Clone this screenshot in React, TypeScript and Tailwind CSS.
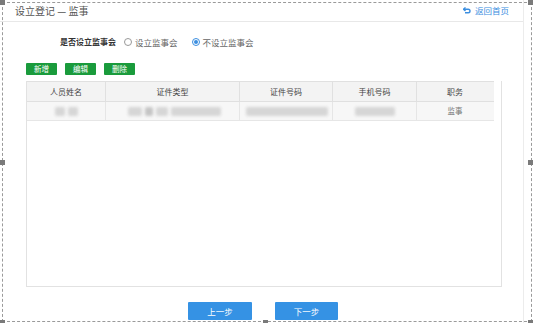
import React from "react";

const font = { fontFamily: '"Noto Sans CJK SC", "Noto Sans", sans-serif' };

function Handle({ className }: { className: string }) {
  return <div className={`absolute w-[5px] h-[5px] bg-[#7a7a7a] ${className}`} />;
}

function Blob({ w, dark = false }: { w: number; dark?: boolean }) {
  return (
    <div
      className={`h-[9px] rounded-[2px] blur-[1.5px] ${dark ? "bg-[#c4c4c4]" : "bg-[#d6d6d6]"}`}
      style={{ width: w }}
    />
  );
}

export default function App() {
  const cols = [
    { label: "人员姓名", w: "w-[79px]" },
    { label: "证件类型", w: "w-[134px]" },
    { label: "证件号码", w: "w-[93px]" },
    { label: "手机号码", w: "w-[84px]" },
    { label: "职务", w: "w-[76px]" },
  ];
  return (
    <div className="relative w-[533px] h-[323px] bg-white overflow-hidden text-[#444]" style={font}>
      {/* panel */}
      <div className="flex flex-col w-[524px] h-[323px] border-r border-[#ececec]">
        <div className="flex items-center justify-between h-[22px] pl-[15px] pr-[14px] border-b border-[#e8e8e8]">
          <span className="text-[10px] text-[#555] leading-none">设立登记 — 监事</span>
          <span className="flex items-center gap-[3px] text-[8.5px] text-[#3b8ee0] leading-none">
            <svg width="8" height="7" viewBox="0 0 8 7" className="mr-[1px]">
              <path d="M2.5 0.5 L0.5 2.2 L2.5 3.9" fill="none" stroke="#3b8ee0" strokeWidth="1.4" />
              <path d="M0.8 2.2 H5.2 A1.8 1.8 0 0 1 5.2 5.8 H2" fill="none" stroke="#3b8ee0" strokeWidth="1.4" />
            </svg>
            返回首页
          </span>
        </div>

        <div className="flex items-center h-[20px] mt-[10px] pl-[60px] text-[8.5px] leading-none">
          <span className="font-bold text-[#333] text-[8px]">是否设立监事会</span>
          <span className="ml-[8px] w-[8px] h-[8px] rounded-full border border-[#999] bg-white" />
          <span className="ml-[3px] text-[#666]">设立监事会</span>
          <span className="ml-[14px] w-[8px] h-[8px] rounded-full border border-[#3b8ee0] bg-white flex items-center justify-center">
            <span className="w-[4px] h-[4px] rounded-full bg-[#3b8ee0]" />
          </span>
          <span className="ml-[3px] text-[#666]">不设立监事会</span>
        </div>

        <div className="flex gap-[8px] pl-[26px] mt-[11px]">
          {["新增", "编辑", "删除"].map((t) => (
            <div
              key={t}
              className="w-[31px] h-[12px] bg-[#1a9b3c] rounded-[1px] text-white text-[7.5px] leading-none flex items-center justify-center"
            >
              {t}
            </div>
          ))}
        </div>

        <div className="ml-[26px] mt-[6px] w-[476px] h-[206px] border border-[#e2e2e2] border-t-0">
          <div className="flex w-[467px] h-[21px] bg-[#f3f3f3] border-t border-b border-[#e0e0e0]">
            {cols.map((c, i) => (
              <div
                key={c.label}
                className={`${c.w} flex items-center justify-center text-[8px] text-[#444] leading-none ${i < 4 ? "border-r border-[#e0e0e0]" : ""}`}
              >
                {c.label}
              </div>
            ))}
          </div>
          <div className="flex w-[467px] h-[19px] bg-[#f7f7f7] border-b border-[#e6e6e6]">
            <div className="w-[79px] border-r border-[#e6e6e6] flex items-center justify-center gap-[3px]">
              <Blob w={10} />
              <Blob w={10} />
            </div>
            <div className="w-[134px] border-r border-[#e6e6e6] flex items-center pl-[22px] gap-[3px]">
              <Blob w={14} />
              <Blob w={8} dark />
              <Blob w={12} />
              <Blob w={50} />
            </div>
            <div className="w-[93px] border-r border-[#e6e6e6] flex items-center pl-[6px]">
              <Blob w={82} />
            </div>
            <div className="w-[84px] border-r border-[#e6e6e6] flex items-center justify-center">
              <Blob w={40} />
            </div>
            <div className="w-[76px] flex items-center justify-center text-[7.5px] text-[#777] leading-none">
              监事
            </div>
          </div>
        </div>

        <div className="flex gap-[23px] pl-[188px] mt-[15px]">
          <div className="w-[64px] h-[18px] bg-[#3592e4] rounded-[1px] text-white text-[8.5px] leading-none flex items-center justify-center">
            上一步
          </div>
          <div className="w-[63px] h-[18px] bg-[#3592e4] rounded-[1px] text-white text-[8.5px] leading-none flex items-center justify-center">
            下一步
          </div>
        </div>
      </div>

      {/* selection frame overlay */}
      <div className="absolute left-[2px] top-[2px] w-[530px] h-[320px] border border-dashed border-[#9a9a9a] pointer-events-none" />
      <Handle className="left-[0px] top-[0px]" />
      <Handle className="left-[528px] top-[0px]" />
      <Handle className="left-[0px] top-[160px]" />
      <Handle className="left-[528px] top-[160px]" />
      <Handle className="left-[0px] top-[320px]" />
      <Handle className="left-[263px] top-[320px]" />
      <Handle className="left-[528px] top-[320px]" />
    </div>
  );
}
